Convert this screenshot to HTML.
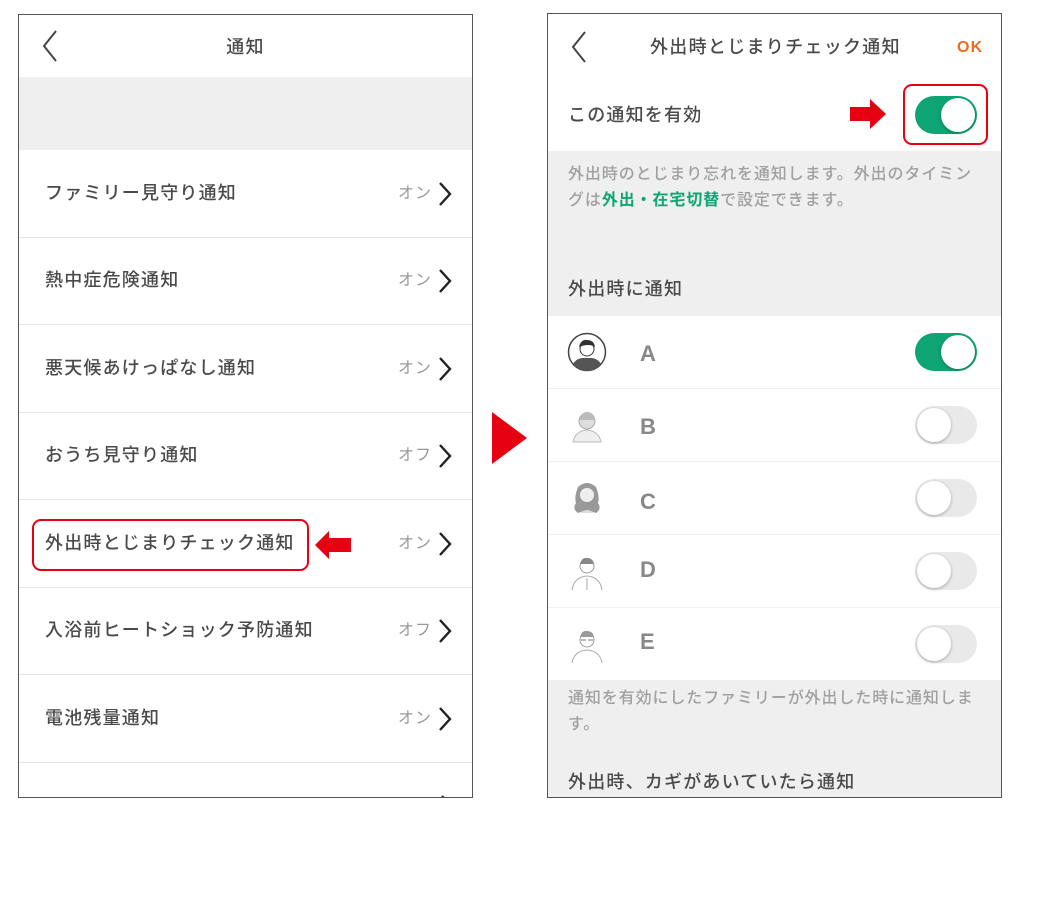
<!DOCTYPE html>
<html><head><meta charset="utf-8"><style>
*{margin:0;padding:0;box-sizing:border-box}
body{width:1058px;height:906px;background:#fff;position:relative;overflow:hidden;font-family:"Liberation Sans","Noto Sans CJK JP",sans-serif;color:#444}
.abs{position:absolute}
.panel{position:absolute;border:1px solid #555;background:#fff;overflow:hidden}
.t{position:absolute;font-weight:500;font-size:18px;letter-spacing:1.2px;white-space:nowrap;line-height:20px;color:#4a4a4a}
.sep{position:absolute;left:0;right:0;height:1px;background:#e6e6e6}
.sw{position:absolute;left:379px;font-size:16px;color:#999;line-height:20px;letter-spacing:1px}
.chev{position:absolute;left:418px}
.tog{position:absolute;width:62px;height:38px;border-radius:19px;background:#e9e9e9}
.tog::after{content:"";position:absolute;top:2px;left:2px;width:34px;height:34px;border-radius:50%;background:#fff;box-shadow:0 1px 3px rgba(0,0,0,.3)}
.tog.on{background:#0ea474}
.tog.on::after{left:26px}
.gray{position:absolute;left:0;right:0;background:#efefef}
.desc{position:absolute;font-size:16px;color:#a0a0a0;line-height:26px;left:20px;font-weight:500;letter-spacing:0.9px;white-space:nowrap}
.let{position:absolute;left:92px;font-size:22px;font-weight:bold;color:#888;line-height:24px}
</style></head><body>

<!-- LEFT PANEL -->
<div class="panel" style="left:18px;top:14px;width:455px;height:784px">
  <svg class="abs" style="left:22px;top:14px" width="18" height="34"><path d="M15 2 L3 17 L15 32" fill="none" stroke="#444" stroke-width="2"/></svg>
  <div class="t" style="left:0;right:0;text-align:center;top:22px;font-size:18px">通知</div>
  <div class="gray" style="top:62px;height:73px"></div>
  <div class="t" style="left:26px;top:168px">ファミリー見守り通知</div><div class="sw" style="top:169px">オン</div>
  <div class="sep" style="top:222px"></div>
  <div class="t" style="left:26px;top:255px">熱中症危険通知</div><div class="sw" style="top:256px">オン</div>
  <div class="sep" style="top:309px"></div>
  <div class="t" style="left:26px;top:343px">悪天候あけっぱなし通知</div><div class="sw" style="top:344px">オン</div>
  <div class="sep" style="top:397px"></div>
  <div class="t" style="left:26px;top:430px">おうち見守り通知</div><div class="sw" style="top:431px">オフ</div>
  <div class="sep" style="top:484px"></div>
  <div class="t" style="left:26px;top:518px">外出時とじまりチェック通知</div><div class="sw" style="top:519px">オン</div>
  <div class="abs" style="left:13px;top:504px;width:277px;height:52px;border:2px solid #e60012;border-radius:9px"></div>
  <svg class="abs" style="left:296px;top:514px" width="38" height="32"><path d="M0 16 L14 2 L14 9 L36 9 L36 23 L14 23 L14 30 Z" fill="#e60012"/></svg>
  <div class="sep" style="top:572px"></div>
  <div class="t" style="left:26px;top:605px">入浴前ヒートショック予防通知</div><div class="sw" style="top:606px">オフ</div>
  <div class="sep" style="top:659px"></div>
  <div class="t" style="left:26px;top:693px">電池残量通知</div><div class="sw" style="top:694px">オン</div>
  <div class="sep" style="top:747px"></div>
  <svg class="chev" style="top:166px" width="16" height="260"><g fill="none" stroke="#222" stroke-width="2.4"><path d="M3 2 L13 13 L3 24"/><path d="M3 89 L13 100 L3 111"/><path d="M3 177 L13 188 L3 199"/></g></svg>
  <svg class="chev" style="top:428px" width="16" height="360"><g fill="none" stroke="#222" stroke-width="2.4"><path d="M3 2 L13 13 L3 24"/><path d="M3 90 L13 101 L3 112"/><path d="M3 177 L13 188 L3 199"/><path d="M3 265 L13 276 L3 287"/><path d="M5 353 L9 358"/></g></svg>
</div>

<!-- center arrow -->
<svg class="abs" style="left:492px;top:412px" width="36" height="52"><path d="M0 0 L35 26 L0 52 Z" fill="#e60012"/></svg>

<!-- RIGHT PANEL -->
<div class="panel" style="left:547px;top:13px;width:455px;height:785px">
  <svg class="abs" style="left:22px;top:16px" width="18" height="34"><path d="M15 2 L3 17 L15 32" fill="none" stroke="#444" stroke-width="2"/></svg>
  <div class="t" style="left:102px;top:23px;font-size:18px;letter-spacing:1.3px">外出時とじまりチェック通知</div>
  <div class="t" style="left:409px;top:24px;font-size:16px;color:#ee6a1f;font-weight:bold">OK</div>
  <div class="t" style="left:20px;top:91px">この通知を有効</div>
  <svg class="abs" style="left:302px;top:83px" width="38" height="34"><path d="M0 10 L20 10 L20 2 L36 17 L20 32 L20 24 L0 24 Z" fill="#e60012"/></svg>
  <div class="abs" style="left:355px;top:70px;width:85px;height:61px;border:2px solid #e60012;border-radius:9px"></div>
  <div class="tog on" style="left:367px;top:82px"></div>
  <div class="gray" style="top:137px;height:165px"></div>
  <div class="desc" style="top:148px">外出時のとじまり忘れを通知します。外出のタイミン<br>グは<span style="color:#0ea474;font-weight:bold">外出・在宅切替</span>で設定できます。</div>
  <div class="t" style="left:20px;top:265px">外出時に通知</div>

  <svg class="abs" style="left:19px;top:318px" width="40" height="40"><circle cx="20" cy="20" r="18.5" fill="#fff" stroke="#444" stroke-width="1.5"/><circle cx="20" cy="17" r="7" fill="#fff" stroke="#333"/><path d="M12 15 Q14 7 20 8 Q27 8 28 15 Q22 11 12 15Z" fill="#333"/><path d="M6 32 Q10 25 20 26 Q30 25 34 32 Q28 39 20 39 Q12 39 6 32Z" fill="#555"/></svg>
  <div class="let" style="left:92px;top:328px">A</div>
  <div class="tog on" style="left:367px;top:319px"></div>
  <div class="sep" style="top:374px;background:#f0f0f0"></div>

  <svg class="abs" style="left:22px;top:392px" width="34" height="40"><circle cx="17" cy="15" r="8" fill="#ddd" stroke="#aaa"/><path d="M9 14 Q11 6 17 6 Q24 6 25 14 Z" fill="#bbb"/><path d="M3 36 Q5 25 17 24 Q29 25 31 36Z" fill="#eee" stroke="#bbb"/></svg>
  <div class="let" style="top:401px">B</div>
  <div class="tog" style="left:367px;top:392px"></div>
  <div class="sep" style="top:447px;background:#f0f0f0"></div>

  <svg class="abs" style="left:22px;top:465px" width="34" height="40"><path d="M8 8 Q17 0 26 8 Q30 18 28 24 Q32 30 26 34 Q17 30 8 34 Q2 30 6 24 Q4 18 8 8Z" fill="#999"/><circle cx="17" cy="16" r="7" fill="#eee"/><path d="M10 34 Q17 28 24 34" fill="#ddd"/></svg>
  <div class="let" style="top:476px">C</div>
  <div class="tog" style="left:367px;top:465px"></div>
  <div class="sep" style="top:520px;background:#f0f0f0"></div>

  <svg class="abs" style="left:22px;top:538px" width="34" height="40"><circle cx="17" cy="14" r="7" fill="#fff" stroke="#999"/><path d="M10 12 Q12 5 17 6 Q23 6 24 12Z" fill="#888"/><path d="M2 38 Q4 25 17 24 Q30 25 32 38" fill="none" stroke="#aaa"/><path d="M17 26 L17 38" stroke="#aaa"/></svg>
  <div class="let" style="top:544px">D</div>
  <div class="tog" style="left:367px;top:538px"></div>
  <div class="sep" style="top:593px;background:#f0f0f0"></div>

  <svg class="abs" style="left:22px;top:611px" width="34" height="40"><circle cx="17" cy="15" r="7" fill="#fff" stroke="#999"/><path d="M10 12 Q12 5 17 6 Q23 6 24 12Z" fill="#999"/><path d="M11 15 h5 M18 15 h5" stroke="#777"/><path d="M2 38 Q4 26 17 25 Q30 26 32 38" fill="none" stroke="#aaa"/></svg>
  <div class="let" style="top:616px">E</div>
  <div class="tog" style="left:367px;top:611px"></div>

  <div class="gray" style="top:666px;height:120px"></div>
  <div class="desc" style="top:672px">通知を有効にしたファミリーが外出した時に通知しま<br>す。</div>
  <div class="t" style="left:20px;top:758px">外出時、カギがあいていたら通知</div>
</div>
</body></html>
